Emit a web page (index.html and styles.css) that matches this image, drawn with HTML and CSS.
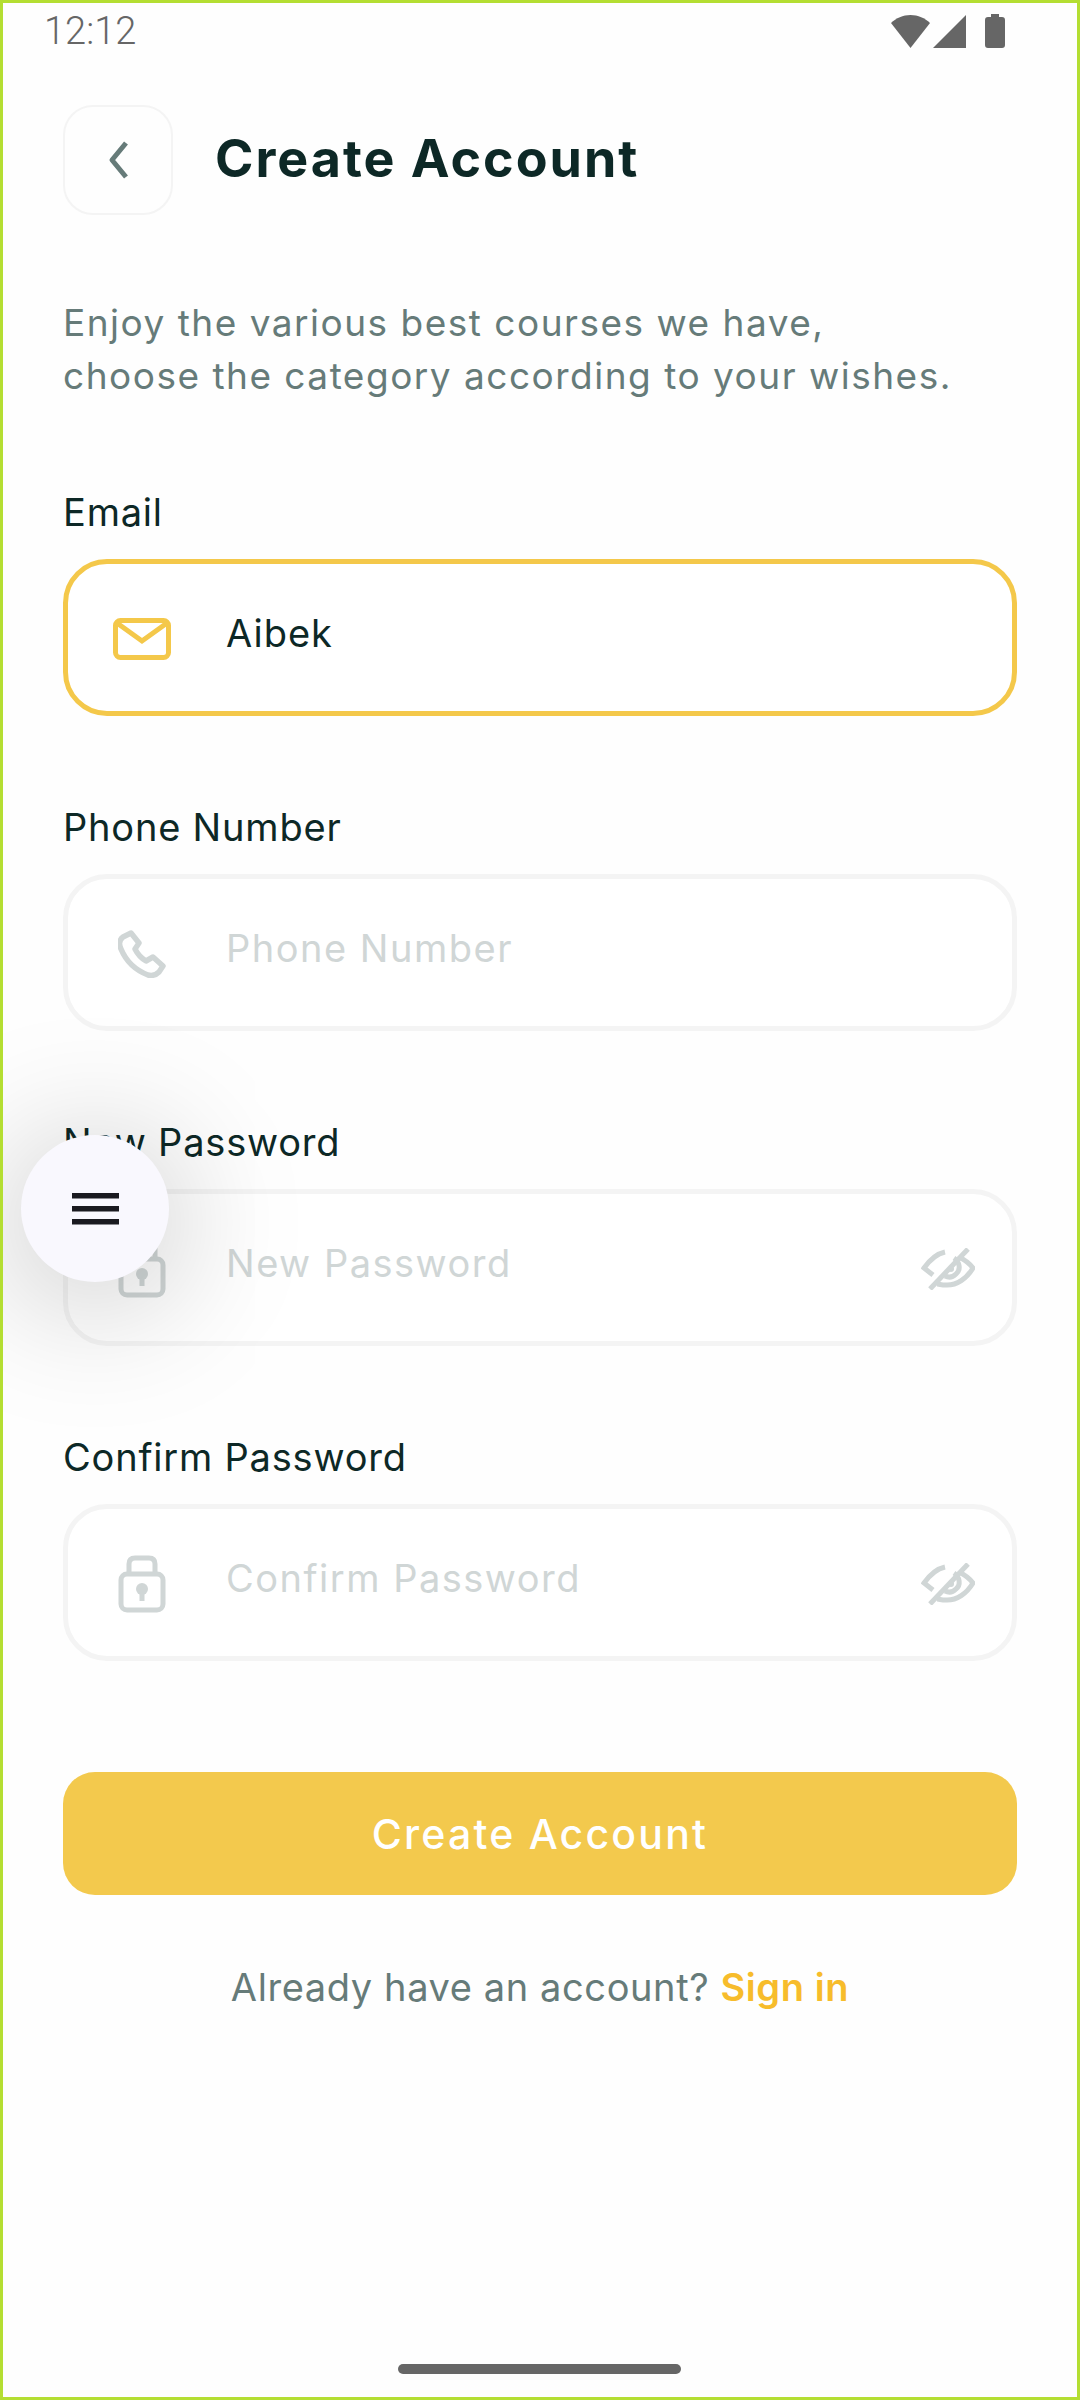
FILE: index.html
```html
<!DOCTYPE html>
<html lang="en">
<head>
    <meta charset="UTF-8">
    <meta name="viewport" content="width=device-width, initial-scale=1.0">
    <title>Create Account</title>
    <link rel="stylesheet" href="styles.css">
</head>
<body>

<div class="screen">
    <div class="status-bar">
        <span class="time">12:12</span>
        <div class="status-icons">
            <svg width="39" height="33" viewBox="0 0 39 33"><path d="M0 8C5 3 12 0 19.500 0S34 3 39 8L19.500 33Z" fill="#666"/></svg>
            <svg width="33" height="33" viewBox="0 0 33 33"><path d="M33 0V33H0Z" fill="#666"/></svg>
            <svg class="battery" width="20" height="34" viewBox="0 0 20 34"><path d="M6 0H14V3H17Q20 3 20 6V31Q20 34 17 34H3Q0 34 0 31V6Q0 3 3 3H6Z" fill="#666"/></svg>
        </div>
    </div>

    <div class="header">
        <button class="back-btn">
            <svg width="24" height="38" viewBox="0 0 24 38"><path d="M20 2 6 19l14 17" fill="none" stroke="#667b79" stroke-width="5" stroke-linejoin="round"/></svg>
        </button>
        <h1>Create Account</h1>
    </div>

    <p class="intro">Enjoy the various best courses we have,<br>choose the category according to your wishes.</p>

    <form class="signup-form">
        <div class="field">
            <label>Email</label>
            <div class="input-box active">
                <span class="field-icon">
                    <svg width="58" height="42" viewBox="0 0 58 42" fill="none" stroke="#f4c84a" stroke-width="5"><rect x="2.500" y="2.500" width="53" height="37" rx="5"/><path d="M4 5 29 23 54 5"/></svg>
                </span>
                <span class="input-text">Aibek</span>
            </div>
        </div>

        <div class="field">
            <label>Phone Number</label>
            <div class="input-box">
                <span class="field-icon">
                    <svg width="48" height="48" viewBox="0 0 48 48" fill="none" stroke="#d0d6d6" stroke-width="5.500" stroke-linejoin="round"><path d="M13 3 5 7C1 10 1 15 3 19 8 31 17 40 30 45 34 46 38 45 41 42L45 36 35 27 28 31C23 28 20 25 17 19L21 13Z"/></svg>
                </span>
                <span class="input-text placeholder">Phone Number</span>
            </div>
        </div>

        <div class="field">
            <label>New Password</label>
            <div class="input-box">
                <span class="field-icon">
                    <svg width="48" height="58" viewBox="0 0 48 58" fill="none" stroke="#d0d6d6" stroke-width="5"><path d="M11 19V9Q11 3 17 3H31Q37 3 37 9V19"/><rect x="3" y="19" width="42" height="36" rx="6"/><circle cx="24" cy="34" r="6" fill="#d0d6d6" stroke="none"/><rect x="21.500" y="34" width="5" height="12" fill="#d0d6d6" stroke="none"/></svg>
                </span>
                <span class="input-text placeholder">New Password</span>
                <span class="eye-icon">
                    <svg width="54" height="42" viewBox="0 0 54 42" fill="none" stroke="#d0d6d6" stroke-width="5"><path d="M24 4C15 6 8 13 3 20L12 27"/><path d="M38 9C44 12 49 16 52 20 46 30 36 38 24 37 21 37 18 36 16 36"/><path d="M33 10C39 14 40 22 35 26 32 29 28 30 24 28"/><circle cx="30" cy="21" r="3" fill="#d0d6d6" stroke="none"/><path d="M47 1 9 41"/></svg>
                </span>
            </div>
        </div>

        <div class="field">
            <label>Confirm Password</label>
            <div class="input-box">
                <span class="field-icon">
                    <svg width="48" height="58" viewBox="0 0 48 58" fill="none" stroke="#d0d6d6" stroke-width="5"><path d="M11 19V9Q11 3 17 3H31Q37 3 37 9V19"/><rect x="3" y="19" width="42" height="36" rx="6"/><circle cx="24" cy="34" r="6" fill="#d0d6d6" stroke="none"/><rect x="21.500" y="34" width="5" height="12" fill="#d0d6d6" stroke="none"/></svg>
                </span>
                <span class="input-text placeholder">Confirm Password</span>
                <span class="eye-icon">
                    <svg width="54" height="42" viewBox="0 0 54 42" fill="none" stroke="#d0d6d6" stroke-width="5"><path d="M24 4C15 6 8 13 3 20L12 27"/><path d="M38 9C44 12 49 16 52 20 46 30 36 38 24 37 21 37 18 36 16 36"/><path d="M33 10C39 14 40 22 35 26 32 29 28 30 24 28"/><circle cx="30" cy="21" r="3" fill="#d0d6d6" stroke="none"/><path d="M47 1 9 41"/></svg>
                </span>
            </div>
        </div>

        <button type="button" class="submit-btn">Create Account</button>
    </form>

    <p class="signin">Already have an account? <a href="#">Sign in</a></p>

    <div class="home-bar"></div>

    <button class="fab">
        <svg width="47" height="32" viewBox="0 0 47 32" fill="#1a1a20"><rect width="47" height="5.500"/><rect y="13" width="47" height="5.500"/><rect y="26" width="47" height="5.500"/></svg>
    </button>
</div>

</body>
</html>
```

FILE: styles.css
```css
* {
    box-sizing: border-box;
}

html, body {
    margin: 0;
    padding: 0;
}

body {
    font-family: "Inter", "Open Sans", sans-serif;
    background-color: #fff;
    color: #0d2826;
}

.screen {
    position: relative;
    width: 1080px;
    height: 2400px;
    border: 3px solid #b4de32;
    background-color: #fefefe;
    padding: 0 60px;
    overflow: hidden;
}

.status-bar {
    display: flex;
    justify-content: space-between;
    align-items: center;
    height: 56px;
    margin: 0 12px 0 -19px;
}

.time {
    font-family: "Roboto", sans-serif;
    font-size: 38px;
    font-weight: 300;
    color: #666;
}

.status-icons {
    display: flex;
    align-items: center;
    gap: 3px;
}

.status-icons svg {
    display: block;
}

.status-icons .battery {
    margin-left: 16px;
}

.header {
    display: flex;
    align-items: center;
    gap: 42px;
    margin-top: 46px;
}

.back-btn {
    display: flex;
    align-items: center;
    justify-content: center;
    width: 110px;
    height: 110px;
    background: none;
    border: 2px solid #f4f4f4;
    border-radius: 30px;
    padding: 0;
}

h1 {
    margin: 0 0 3px;
    font-size: 52px;
    font-weight: 700;
    letter-spacing: 2px;
    color: #0d2826;
}

.intro {
    margin: 81px 0 0;
    font-size: 37px;
    line-height: 53px;
    color: #667b79;
    letter-spacing: 1.500px;
    white-space: nowrap;
}

.signup-form {
    display: flex;
    flex-direction: column;
    margin-top: 87px;
}

.field {
    display: flex;
    flex-direction: column;
    height: 315px;
}

.field label {
    height: 47px;
    font-size: 38px;
    line-height: 47px;
    letter-spacing: 0.800px;
    margin-bottom: 23px;
}

.input-box {
    display: flex;
    align-items: center;
    height: 157px;
    border: 5px solid #f4f4f4;
    border-radius: 44px;
    padding: 0 37px 0 45px;
    background-color: #fff;
}

.input-box.active {
    border-color: #f4c84a;
}

.field-icon {
    display: flex;
    align-items: center;
    justify-content: center;
    width: 58px;
    margin-right: 55px;
    margin-top: 2px;
}

.input-text {
    flex: 1;
    font-size: 38px;
    margin-top: -10px;
    letter-spacing: 1px;
    color: #0d2826;
}

.input-text.placeholder {
    color: #d0d6d6;
    letter-spacing: 1.500px;
}

.eye-icon {
    display: flex;
    margin-top: 2px;
}

.submit-btn {
    height: 123px;
    margin-top: 23px;
    border: none;
    border-radius: 32px;
    background-color: #f3c94d;
    color: #fff;
    font-family: inherit;
    font-size: 41px;
    font-weight: 500;
    letter-spacing: 2.200px;
}

.signin {
    margin: 69px 0 0;
    text-align: center;
    font-size: 38px;
    letter-spacing: 0.600px;
    color: #667b79;
}

.signin a {
    color: #f7bc2b;
    font-weight: 600;
    text-decoration: none;
}

.home-bar {
    position: absolute;
    left: 395px;
    bottom: 23px;
    width: 283px;
    height: 10px;
    border-radius: 5px;
    background-color: #666;
}

.fab {
    position: absolute;
    left: 18px;
    top: 1132px;
    display: flex;
    align-items: center;
    justify-content: center;
    width: 148px;
    height: 147px;
    border: none;
    border-radius: 50%;
    background-color: #f9f8fe;
    box-shadow: 0 14px 140px rgba(0, 0, 0, 0.28);
}
```
